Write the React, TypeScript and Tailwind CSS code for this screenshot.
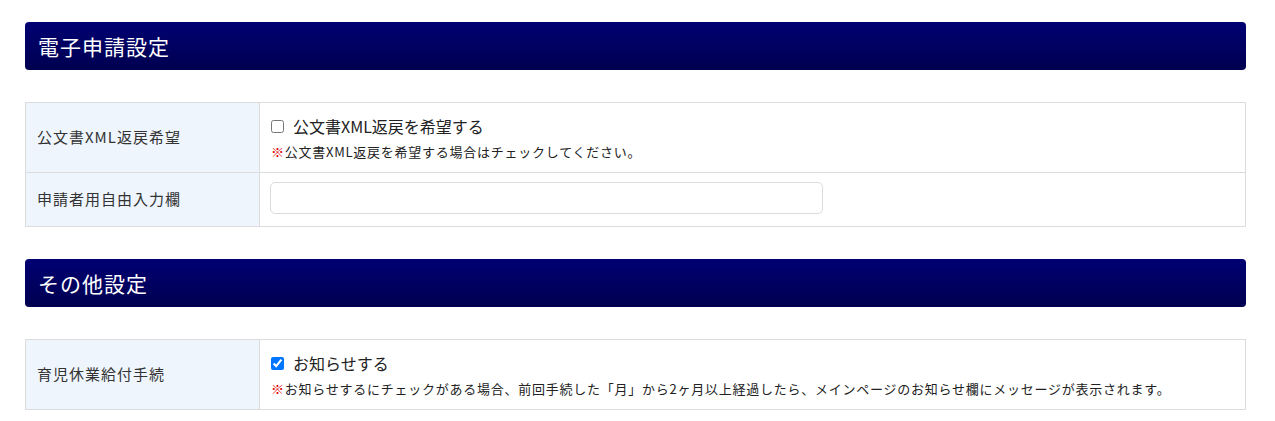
import React, { useState } from 'react';

const font = { fontFamily: '"Noto Sans CJK JP", "Noto Sans", sans-serif' };

const SectionHeader: React.FC<{ title: string }> = ({ title }) => (
    <div className="h-[48px] rounded-[4px] bg-gradient-to-b from-[#000073] to-[#000050] flex items-center px-[13px]">
        <h2 className="text-[21px] tracking-[1px] text-white leading-none">{title}</h2>
    </div>
);

const Note: React.FC<{ children: React.ReactNode }> = ({ children }) => (
    <p className="text-[13px] tracking-[0.75px] text-[#222] leading-[16px] mt-[8px]">
        <span className="text-[#e00000] font-bold">※</span>
        {children}
    </p>
);

export default function App() {
    const [xmlReturn, setXmlReturn] = useState(false);
    const [notify, setNotify] = useState(true);
    const [freeText, setFreeText] = useState('');

    return (
        <div className="bg-white pt-[22px] pl-[25px] pr-[29px] pb-[12px] text-[#333]" style={font}>
            <SectionHeader title="電子申請設定" />

            <table className="w-full mt-[32px] border-collapse border border-[#dcdcdc] text-[15px] tracking-[1px]">
                <tbody>
                    <tr className="h-[70px]">
                        <th className="w-[234px] bg-[#eef5fd] border border-[#dcdcdc] text-left font-normal px-[11px]">
                            公文書XML返戻希望
                        </th>
                        <td className="border border-[#dcdcdc] px-[11px] pt-[13px] pb-[10px] align-top tracking-normal">
                            <label className="flex items-center gap-[9px] text-[16px] text-[#222] leading-[20px]">
                                <input
                                    type="checkbox"
                                    checked={xmlReturn}
                                    onChange={(e) => setXmlReturn(e.target.checked)}
                                    className="w-[13px] h-[13px]"
                                />
                                公文書XML返戻を希望する
                            </label>
                            <Note>公文書XML返戻を希望する場合はチェックしてください。</Note>
                        </td>
                    </tr>
                    <tr className="h-[54px]">
                        <th className="bg-[#eef5fd] border border-[#dcdcdc] text-left font-normal px-[11px]">
                            申請者用自由入力欄
                        </th>
                        <td className="border border-[#dcdcdc] px-[10px] pt-[9px] align-top">
                            <input
                                type="text"
                                value={freeText}
                                onChange={(e) => setFreeText(e.target.value)}
                                className="block w-[553px] h-[32px] border border-[#dcdcdc] rounded-[5px] px-2 outline-none"
                            />
                        </td>
                    </tr>
                </tbody>
            </table>

            <div className="mt-[32px]">
                <SectionHeader title="その他設定" />
            </div>

            <table className="w-full mt-[32px] border-collapse border border-[#dcdcdc] text-[15px] tracking-[1px]">
                <tbody>
                    <tr className="h-[70px]">
                        <th className="w-[234px] bg-[#eef5fd] border border-[#dcdcdc] text-left font-normal px-[11px]">
                            育児休業給付手続
                        </th>
                        <td className="border border-[#dcdcdc] px-[11px] pt-[13px] pb-[10px] align-top tracking-normal">
                            <label className="flex items-center gap-[9px] text-[16px] text-[#222] leading-[20px]">
                                <input
                                    type="checkbox"
                                    checked={notify}
                                    onChange={(e) => setNotify(e.target.checked)}
                                    className="w-[13px] h-[13px]"
                                />
                                お知らせする
                            </label>
                            <Note>お知らせするにチェックがある場合、前回手続した「月」から2ヶ月以上経過したら、メインページのお知らせ欄にメッセージが表示されます。</Note>
                        </td>
                    </tr>
                </tbody>
            </table>
        </div>
    );
}
